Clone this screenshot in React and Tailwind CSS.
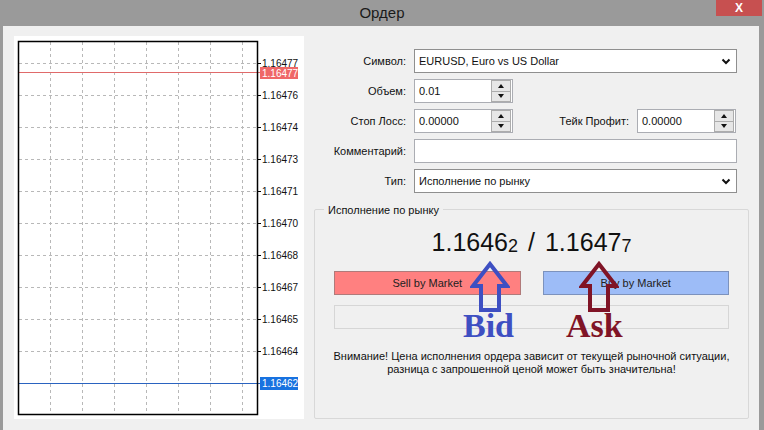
import React from 'react';

const ui = { fontFamily: '"Liberation Sans", Arial, sans-serif' };

const gridX = [36.5, 68.5, 100.5, 132.5, 164.5, 196.5, 228.5];
const levels = [
  ['1.16477', 27.5],
  ['1.16476', 59.5],
  ['1.16474', 91.5],
  ['1.16473', 123.5],
  ['1.16471', 155.5],
  ['1.16470', 187.5],
  ['1.16468', 219.5],
  ['1.16467', 251.5],
  ['1.16465', 283.5],
  ['1.16464', 315.5],
];

function Chart() {
  return (
    <svg width="290" height="383" className="block">
      <rect x="0" y="0" width="290" height="383" fill="#ffffff" />
      {gridX.map(x => (
        <line key={x} x1={x} y1="6" x2={x} y2="378" stroke="#b8b8b8" strokeDasharray="3 3" />
      ))}
      {levels.map(([label, y]) => (
        <g key={label}>
          <line x1="5" y1={y} x2="243" y2={y} stroke="#b8b8b8" strokeDasharray="3 3" />
          <line x1="243" y1={y} x2="247" y2={y} stroke="#000" />
          <text x="248" y={y + 3} fontSize="10" fill="#111" style={ui}>{label}</text>
        </g>
      ))}
      <line x1="5" y1="36.5" x2="246" y2="36.5" stroke="#e06a6a" />
      <rect x="246" y="31" width="38" height="12" fill="#ef6767" />
      <text x="248" y="40.5" fontSize="10" fill="#fff" style={ui}>1.16477</text>
      <line x1="5" y1="347.5" x2="246" y2="347.5" stroke="#2a63c0" />
      <rect x="246" y="341" width="38" height="13" fill="#1872e0" />
      <text x="248" y="351" fontSize="10" fill="#fff" style={ui}>1.16462</text>
      <rect x="4.5" y="5.5" width="239" height="373" fill="none" stroke="#000" strokeWidth="1.5" />
    </svg>
  );
}

function Chevron() {
  return (
    <svg width="10" height="7" viewBox="0 0 10 7">
      <polyline points="1.5,1.5 5,5 8.5,1.5" fill="none" stroke="#111" strokeWidth="2" />
    </svg>
  );
}

function Select({ value }) {
  return (
    <div className="h-6 w-[323px] bg-white border border-[#8f8f8f] flex items-center pl-[4px] pr-[5px] text-[11px] text-[#111]">
      <span className="flex-1">{value}</span>
      <Chevron />
    </div>
  );
}

function Spin({ value }) {
  return (
    <div className="h-6 w-[99px] bg-white border border-[#abadb3] flex items-center text-[11px] text-[#111]">
      <span className="flex-1 pl-[4px]">{value}</span>
      <div className="flex flex-col w-[20px] h-[22px] mr-[1px]">
        <div className="flex-1 border border-[#acacac] bg-[#e6e6e6] flex items-center justify-center">
          <svg width="6" height="4"><polygon points="0,4 3,0 6,4" fill="#111" /></svg>
        </div>
        <div className="flex-1 border border-t-0 border-[#acacac] bg-[#e6e6e6] flex items-center justify-center">
          <svg width="6" height="4"><polygon points="0,0 3,4 6,0" fill="#111" /></svg>
        </div>
      </div>
    </div>
  );
}

function Label({ children }) {
  return <div className="w-[92px] text-right text-[11px] text-[#111]">{children}</div>;
}

function Arrow({ color }) {
  return (
    <svg width="40" height="52" viewBox="0 0 40 52">
      <polygon points="20,3 37,25 29,25 29,49 11,49 11,25 3,25" fill="none" stroke={color} strokeWidth="4" strokeLinejoin="miter" />
    </svg>
  );
}

export default function App() {
  return (
    <div className="w-[764px] h-[430px] bg-[#9a9a9a] flex flex-col overflow-hidden" style={ui}>
      {/* title bar */}
      <div className="h-[26px] relative flex items-center justify-center">
        <span className="text-[15px] text-[#1a1a1a]">Ордер</span>
        <div className="absolute right-[2px] top-0 w-[46px] h-[16px] bg-[#c75050] flex items-center justify-center text-white text-[12px] font-bold">X</div>
      </div>

      <div className="flex-1 ml-[3px] mr-[5px] bg-[#f0f0f0] flex pl-[11px] pt-[10px] pb-[11px]">
        <div className="w-[290px] h-[383px] border-r border-b border-[#dadada]">
          <Chart />
        </div>

        <div className="flex-1 pl-[10px] pr-[10px] flex flex-col">
          <div className="mt-[13px] flex flex-col gap-[6px]">
            <div className="flex items-center gap-2">
              <Label>Символ:</Label>
              <Select value="EURUSD, Euro vs US Dollar" />
            </div>
            <div className="flex items-center gap-2">
              <Label>Объем:</Label>
              <Spin value="0.01" />
            </div>
            <div className="flex items-center gap-2">
              <Label>Стоп Лосс:</Label>
              <Spin value="0.00000" />
              <div className="w-[108px] text-right text-[11px] text-[#111]">Тейк Профит:</div>
              <Spin value="0.00000" />
            </div>
            <div className="flex items-center gap-2">
              <Label>Комментарий:</Label>
              <div className="h-6 w-[323px] bg-white border border-[#abadb3]" />
            </div>
            <div className="flex items-center gap-2">
              <Label>Тип:</Label>
              <Select value="Исполнение по рынку" />
            </div>
          </div>

          <div className="relative mt-[16px] flex-1 border border-[#d8d8d8] rounded-[2px] px-[19px] flex flex-col">
            <span className="absolute left-[9px] top-[-8px] bg-[#f0f0f0] px-[4px] text-[11px] text-[#111]">Исполнение по рынку</span>

            <div className="mt-[15px] h-[30px] flex items-end justify-center text-[#111] leading-none">
              <span className="text-[25px]">1.1646</span>
              <span className="text-[18px]">2</span>
              <span className="text-[25px] mx-[10px]">/</span>
              <span className="text-[25px]">1.1647</span>
              <span className="text-[18px]">7</span>
            </div>

            <div className="mt-[16px] flex gap-[22px]">
              <div className="flex-1 h-6 bg-[#ff8080] border border-[#b07a7a] flex items-center justify-center text-[11px] text-[#222]">Sell by Market</div>
              <div className="flex-1 h-6 bg-[#9dbcf7] border border-[#7c92bd] flex items-center justify-center text-[11px] text-[#222]">Buy by Market</div>
            </div>

            <div className="mt-[10px] h-6 border border-[#d6d6d6]" />

            <div className="mt-[21px] -mx-[12px] text-center text-[11px] leading-[13px] text-[#111] whitespace-nowrap">
              Внимание! Цена исполнения ордера зависит от текущей рыночной ситуации,<br />
              разница с запрошенной ценой может быть значительна!
            </div>

            {/* Bid / Ask annotations */}
            <div className="absolute left-[155px] top-[51px]"><Arrow color="#3e4fc2" /></div>
            <div className="absolute left-[148px] top-[99px] text-[34px] font-bold text-[#3e4fc2] leading-none" style={{ fontFamily: '"Liberation Serif", serif' }}>Bid</div>
            <div className="absolute left-[264px] top-[51px]"><Arrow color="#801426" /></div>
            <div className="absolute left-[251px] top-[99px] text-[34px] font-bold text-[#801426] leading-none" style={{ fontFamily: '"Liberation Serif", serif' }}>Ask</div>
          </div>
        </div>
      </div>
    </div>
  );
}
